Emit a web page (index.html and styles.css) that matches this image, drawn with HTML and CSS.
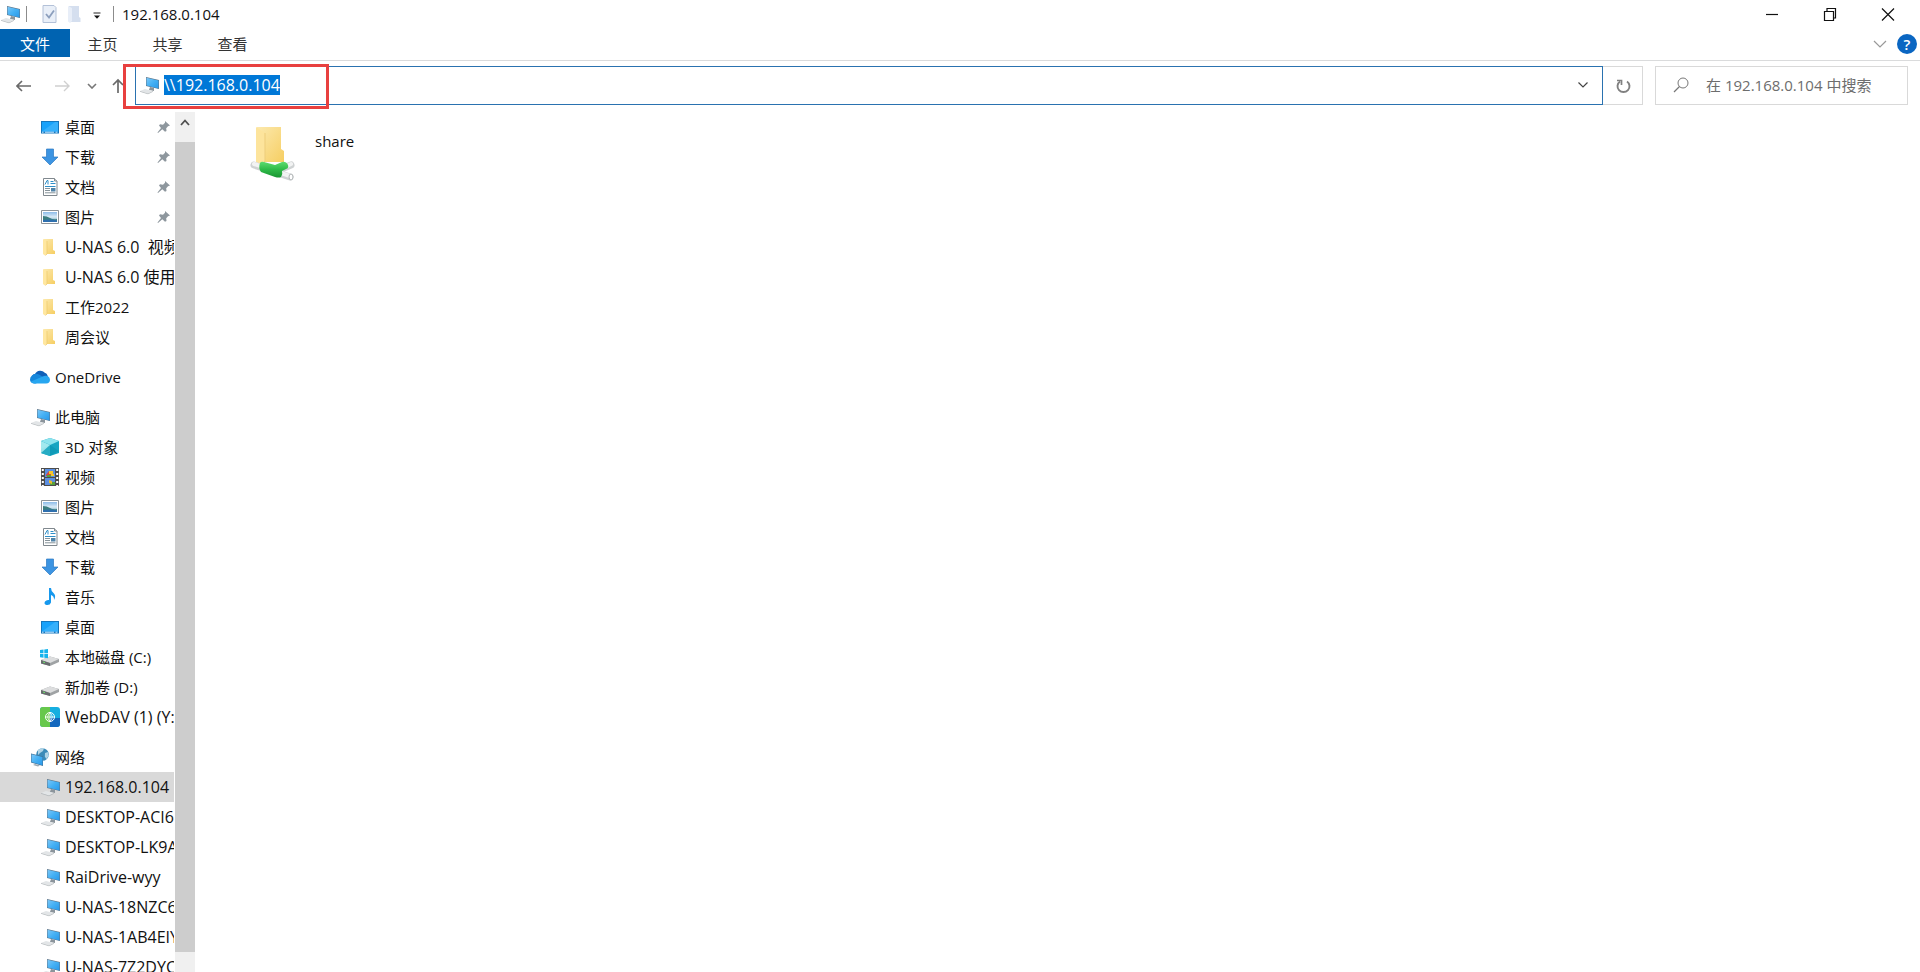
FILE: index.html
```html
<!DOCTYPE html>
<html lang="zh-CN">
<head>
<meta charset="utf-8">
<title>192.168.0.104</title>
<link rel="stylesheet" href="styles.css">
</head>
<body>
<svg class="sprite" aria-hidden="true">
  <defs>
    <linearGradient id="screen" x1="0" y1="0" x2="1" y2="1"><stop offset="0" stop-color="#7cc8f8"/><stop offset=".5" stop-color="#44b0f4"/><stop offset="1" stop-color="#2a98e8"/></linearGradient>
    <linearGradient id="gold" x1="0" y1="0" x2="1" y2="1"><stop offset="0" stop-color="#fce9ae"/><stop offset="1" stop-color="#f6ce62"/></linearGradient>
    <linearGradient id="sky" x1="0" y1="0" x2="0" y2="1"><stop offset="0" stop-color="#8cbce8"/><stop offset=".5" stop-color="#dcecf6"/><stop offset="1" stop-color="#4a90a8"/></linearGradient>
    <linearGradient id="pipe" x1="0" y1="0" x2="0" y2="1"><stop offset="0" stop-color="#5fdc70"/><stop offset=".5" stop-color="#2fba48"/><stop offset="1" stop-color="#1a9632"/></linearGradient>
  </defs>
  <symbol id="pc" viewBox="0 0 20 20">
    <path d="M11 12l4 1v3l-5-1z" fill="#8b949b"/>
    <path d="M7 2l13 3v9L7 11z" fill="#5d7488"/>
    <path d="M7.500 2.700l12 2.800v7.900l-12-2.900z" fill="url(#screen)"/>
    <path d="M1 16l5-2 8 2-5 2.500z" fill="#e2e5e7"/>
    <path d="M1 16l8 2.500L14 16v.7l-5 2.500-8-2.500z" fill="#b3b8bb"/>
  </symbol>
  <symbol id="desktop" viewBox="0 0 20 20"><path d="M1 4h18v12.500H1z" fill="#1677bd"/><path d="M2 5h16v9.500H2z" fill="#18a2fa"/><path d="M2 14.500l13-9.500h3v9.500z" fill="#36b0fb"/><path d="M2 15.200h1.500M5 15.200h9M15.500 15.200h2" stroke="#cfeaff"/></symbol>
  <symbol id="down" viewBox="0 0 20 20"><path d="M6.500 2h7v8H18l-8 8-8-8h4.500z" fill="#3c94e2" stroke="#2b78c2" stroke-width=".7"/></symbol>
  <symbol id="doc" viewBox="0 0 20 20"><path d="M3.500 1.500h11l2.500 2.500v14.500H3.500z" fill="#fff" stroke="#80888e"/><path d="M14.500 1.500V4H17" fill="#d7dde0" stroke="#80888e"/><path d="M5 7.500L7 3.500h1v4M10.500 4.500h3M10.500 6.500h5" fill="none" stroke="#2f8fc8"/><path d="M5 9.500h10.500" stroke="#2f8fc8"/><path d="M5 11.500h5M5 13.500h5M5 15.800h10.500" stroke="#87939a"/><path d="M11 11h4.500v3.500H11z" fill="#4f83a8"/></symbol>
  <symbol id="pic" viewBox="0 0 20 20"><path d="M1.500 3.500h17v13h-17z" fill="#fff" stroke="#8d9499"/><path d="M3 5h14v10H3z" fill="url(#sky)"/><path d="M3 9q4 0 7 2t7 1v2.500H3z" fill="#3b7e80"/><path d="M3 13q7-1 14 .5V15H3z" fill="#2e6fae"/></symbol>
  <symbol id="folder" viewBox="0 0 20 20"><path d="M4 2h9v11l2 1v3H4z" fill="url(#gold)"/><path d="M3 2l4 2v13l-2 1.500L3 17z" fill="#ffe7a0"/><path d="M7 4v13l-1.500 1.500" fill="none" stroke="#edc869" stroke-width=".7"/></symbol>
  <symbol id="cloud" viewBox="0 0 20 20"><path d="M5 7a6 6 0 0 1 10-1q2 0 3 4L9 12 2 9q1-2 3-2z" fill="#0f5fb8"/><path d="M2 8.500q3-3 7-1l5 3-8 6H4Q0 16 0 12.500 0 10 2 8.500z" fill="#1587dc"/><path d="M14 9q5-1 6 3.500 0 3.800-4 4H4q-2 0-3-2z" fill="#27a6f0"/></symbol>
  <symbol id="cube" viewBox="0 0 20 20"><path d="M10 1l9 3v12l-9 3-9-3V4z" fill="#17a5c2"/><path d="M1 4l9-3 9 3-9 4z" fill="#8ee4ee"/><path d="M1 4l9 4v11l-9-3z" fill="#40c5d8"/><path d="M1 12l9-4 9 6-9 5-9-3z" fill="#078eac" opacity=".45"/><path d="M1 4l9 4-9 8z" fill="#baf1f4" opacity=".8"/></symbol>
  <symbol id="film" viewBox="0 0 20 20"><path d="M1 1h18v18H1z" fill="#4c4c4c"/><path d="M5 2h10v8H5zM5 11h10v7H5z" fill="#5b8fe2"/><path d="M6 8l3-4 3 1 2 4H6z" fill="#de4638"/><path d="M9 4h4v3H9zM11 7h3v2h-3z" fill="#f3c72c"/><path d="M7 8h4v2H7zM10 15h5v3h-5z" fill="#56a13c"/><path d="M9 13l3 1v3l-3-1z" fill="#eebb2b"/><path d="M2.800 2v17M17.200 2v17" stroke="#fff" stroke-width="2" stroke-dasharray="2 2"/></symbol>
  <symbol id="note" viewBox="0 0 20 20"><path d="M9 1h2q0 3 2.500 5 3 2.500.5 7 .3-4-3-5v7.500q-1 3-4.500 2.500Q3.500 17 5 14.500q1.500-2 4-1.500z" fill="#1698ed"/></symbol>
  <symbol id="drive" viewBox="0 0 20 20"><path d="M1 13l9-3.500 9 2.500v3l-9 4-9-2.500z" fill="#9fa2a4"/><path d="M1 13l9-3.500 9 2.500-9 4z" fill="#dcddde"/><path d="M1 13l9 3v3l-9-2.500z" fill="#686c6e"/><path d="M3 15l2 .6" stroke="#6ee46f"/></symbol>
  <symbol id="sysdrive" viewBox="0 0 20 20"><use href="#drive"/><path d="M0 3l3.500-.5v3.800H0zM4.300 2.400L8 2v4.300H4.300zM0 7h3.500v3.700L0 10.300zM4.300 7H8v4.200l-3.700-.5z" fill="#15b3ec"/></symbol>
  <symbol id="dav" viewBox="0 0 20 20"><rect width="20" height="20" rx="3" fill="#16aee0"/><path d="M3 0h7v20H3q-3 0-3-3V3q0-3 3-3z" fill="#67c84c"/><path d="M10 11h10v6q0 3-3 3h-7z" fill="#1267bd"/><circle cx="10" cy="10" r="4.500" fill="none" stroke="#fff"/><path d="M5.500 10h9M10 5.500v9M10 5.500q-4.500 4.500 0 9M10 5.500q4.500 4.500 0 9" fill="none" stroke="#fff" stroke-width=".8"/></symbol>
  <symbol id="net" viewBox="0 0 20 20"><circle cx="12.500" cy="7.500" r="6.300" fill="#3c8bb8"/><path d="M8 3q3-2.500 6-2l-1 3-3 2-2 2zM15 6l3-1 .8 4-2.500 3-1.500-2.500z" fill="#b0d4e6"/><path d="M1 6.500l12 3v9.500L1 15.500z" fill="#3f6f95"/><path d="M1.500 7.200l11 2.800v8.200l-11-3.200z" fill="url(#screen)"/><path d="M5 17l5 1.500-2 .9-5-1.400z" fill="#9ba9b2"/></symbol>
  <symbol id="pin" viewBox="0 0 14 14"><path d="M8 1l5 4.500-2 .8-1.800 2 .3 2.700-1.500.8-2.700-2.600L1 13l-.5-.5L4 8 2 5.500 3 4.300l3 .4 2-1.900z" fill="#8e979e"/></symbol>
</svg>

<header class="titlebar">
  <svg class="icon app-icon"><use href="#pc"/></svg>
  <span class="rule"></span>
  <button class="quick quick-check" aria-label="属性"><svg width="16" height="20" viewBox="0 0 16 20"><path d="M1 1.500h11l2 2v15H1z" fill="#e9eff8" stroke="#b3c1d8"/><path d="M4 10l3 3.500L12 6.500" fill="none" stroke="#8c9fbd" stroke-width="1.800"/></svg></button>
  <button class="quick" aria-label="新建文件夹"><svg width="13" height="20" viewBox="0 0 13 20"><path d="M1 2h10v11l1.500 1v4H1z" fill="#d5dfef"/><path d="M0 2l4 2v13l-2 2-2-1.500z" fill="#e8eef8"/></svg></button>
  <button class="quick quick-more" aria-label="自定义快速访问工具栏"><svg width="8" height="8" viewBox="0 0 8 8"><path d="M.5 1h7" stroke="#222"/><path d="M1 3.500h6L4 6.800z" fill="#111"/></svg></button>
  <span class="rule"></span>
  <h1 class="title">192.168.0.104</h1>
  <div class="window-controls">
    <button aria-label="最小化"><svg width="14" height="14" viewBox="0 0 14 14"><path d="M1 7.500h12"/></svg></button>
    <button aria-label="还原"><svg width="14" height="14" viewBox="0 0 14 14"><path d="M1.500 4.500h9v9h-9zM4 4V1.500h8.500V11H11"/></svg></button>
    <button aria-label="关闭"><svg width="14" height="14" viewBox="0 0 14 14"><path d="M1 1.500l12 12M13 1.500l-12 12"/></svg></button>
  </div>
</header>

<div class="ribbon">
  <button class="tab tab-file">文件</button>
  <button class="tab">主页</button>
  <button class="tab">共享</button>
  <button class="tab">查看</button>
  <div class="ribbon-end">
    <button aria-label="展开功能区"><svg width="14" height="8" viewBox="0 0 14 8"><path d="M1 1l6 6 6-6" fill="none" stroke="#999" stroke-width="1.200"/></svg></button>
    <button class="help" aria-label="帮助">?</button>
  </div>
</div>

<div class="toolbar">
  <div class="history">
    <button aria-label="后退"><svg width="16" height="14" viewBox="0 0 16 14"><path d="M6 2L1 7l5 5M1 7h14" fill="none" stroke="#6a6a6a" stroke-width="1.600"/></svg></button>
    <button aria-label="前进" disabled><svg width="16" height="14" viewBox="0 0 16 14"><path d="M9 2l5 5-5 5M14 7H0" fill="none" stroke="#d0d0d0" stroke-width="1.400"/></svg></button>
    <button class="recent" aria-label="最近浏览的位置"><svg width="10" height="6" viewBox="0 0 10 6"><path d="M1 1l4 4 4-4" fill="none" stroke="#777" stroke-width="1.600"/></svg></button>
    <button class="up" aria-label="向上"><svg width="12" height="16" viewBox="0 0 12 16"><path d="M1 7l5-5 5 5M6 2v13" fill="none" stroke="#6a6a6a" stroke-width="1.700"/></svg></button>
  </div>
  <div class="address">
    <svg class="icon"><use href="#pc"/></svg>
    <input id="address" type="text" value="\\192.168.0.104" aria-label="地址" spellcheck="false">
    <button aria-label="以前的位置"><svg width="10" height="6" viewBox="0 0 10 6"><path d="M.5.500L5 5 9.500.500" fill="none" stroke="#444" stroke-width="1.200"/></svg></button>
    <span class="highlight"></span>
  </div>
  <button class="refresh" aria-label="刷新"><svg width="16" height="16" viewBox="0 0 16 16"><path d="M5 3.500A6 5.800 0 1 0 12 3.500" fill="none" stroke="#808080" stroke-width="1.900"/><path d="M2 2.500h4.500V7" fill="none" stroke="#808080" stroke-width="1.700"/></svg></button>
  <div class="search">
    <svg width="16" height="16" viewBox="0 0 16 16"><circle cx="10" cy="6" r="5" fill="none" stroke="#777"/><path d="M6.500 9.500L1 15" stroke="#777" stroke-width="1.200"/></svg>
    <input type="text" placeholder="在 192.168.0.104 中搜索" aria-label="搜索">
  </div>
</div>

<div class="body">
  <nav class="tree" aria-label="导航窗格">
    <div class="group">
      <a class="row" href="#"><svg class="icon"><use href="#desktop"/></svg><span class="label">桌面</span><svg class="pin"><use href="#pin"/></svg></a>
      <a class="row" href="#"><svg class="icon"><use href="#down"/></svg><span class="label">下载</span><svg class="pin"><use href="#pin"/></svg></a>
      <a class="row" href="#"><svg class="icon"><use href="#doc"/></svg><span class="label">文档</span><svg class="pin"><use href="#pin"/></svg></a>
      <a class="row" href="#"><svg class="icon"><use href="#pic"/></svg><span class="label">图片</span><svg class="pin"><use href="#pin"/></svg></a>
      <a class="row named" href="#"><svg class="icon"><use href="#folder"/></svg><span class="label">U-NAS 6.0  视频</span></a>
      <a class="row named" href="#"><svg class="icon"><use href="#folder"/></svg><span class="label">U-NAS 6.0 使用</span></a>
      <a class="row" href="#"><svg class="icon"><use href="#folder"/></svg><span class="label">工作2022</span></a>
      <a class="row" href="#"><svg class="icon"><use href="#folder"/></svg><span class="label">周会议</span></a>
    </div>
    <div class="group">
      <a class="row root" href="#"><svg class="icon"><use href="#cloud"/></svg><span class="label">OneDrive</span></a>
    </div>
    <div class="group">
      <a class="row root" href="#"><svg class="icon"><use href="#pc"/></svg><span class="label">此电脑</span></a>
      <a class="row" href="#"><svg class="icon"><use href="#cube"/></svg><span class="label">3D 对象</span></a>
      <a class="row" href="#"><svg class="icon"><use href="#film"/></svg><span class="label">视频</span></a>
      <a class="row" href="#"><svg class="icon"><use href="#pic"/></svg><span class="label">图片</span></a>
      <a class="row" href="#"><svg class="icon"><use href="#doc"/></svg><span class="label">文档</span></a>
      <a class="row" href="#"><svg class="icon"><use href="#down"/></svg><span class="label">下载</span></a>
      <a class="row" href="#"><svg class="icon"><use href="#note"/></svg><span class="label">音乐</span></a>
      <a class="row" href="#"><svg class="icon"><use href="#desktop"/></svg><span class="label">桌面</span></a>
      <a class="row" href="#"><svg class="icon"><use href="#sysdrive"/></svg><span class="label">本地磁盘 (C:)</span></a>
      <a class="row" href="#"><svg class="icon"><use href="#drive"/></svg><span class="label">新加卷 (D:)</span></a>
      <a class="row named" href="#"><svg class="icon"><use href="#dav"/></svg><span class="label">WebDAV (1) (Y:)</span></a>
    </div>
    <div class="group">
      <a class="row root" href="#"><svg class="icon"><use href="#net"/></svg><span class="label">网络</span></a>
      <a class="row named selected" href="#" aria-current="page"><svg class="icon"><use href="#pc"/></svg><span class="label">192.168.0.104</span></a>
      <a class="row named" href="#"><svg class="icon"><use href="#pc"/></svg><span class="label">DESKTOP-ACI6</span></a>
      <a class="row named" href="#"><svg class="icon"><use href="#pc"/></svg><span class="label">DESKTOP-LK9A</span></a>
      <a class="row named" href="#"><svg class="icon"><use href="#pc"/></svg><span class="label">RaiDrive-wyy</span></a>
      <a class="row named" href="#"><svg class="icon"><use href="#pc"/></svg><span class="label">U-NAS-18NZC6</span></a>
      <a class="row named" href="#"><svg class="icon"><use href="#pc"/></svg><span class="label">U-NAS-1AB4EIY</span></a>
      <a class="row named" href="#"><svg class="icon"><use href="#pc"/></svg><span class="label">U-NAS-7Z2DYC</span></a>
    </div>
  </nav>
  <div class="scrollbar">
    <button aria-label="向上滚动"><svg width="10" height="7" viewBox="0 0 10 7"><path d="M1 6l4-4.500L9 6" fill="none" stroke="#505050" stroke-width="1.800"/></svg></button>
    <div class="thumb"></div>
  </div>
  <main class="files">
    <a class="tile" href="#">
      <svg width="48" height="56" viewBox="0 0 48 56">
        <path d="M8 1h24v22l3 2v11H8z" fill="url(#gold)"/>
        <path d="M7 1l9 6v28l-3 4-6-3z" fill="#fde49c"/><path d="M16 7v28l-3 4" fill="none" stroke="#edcd7b"/>
        <path d="M42 39l-12 5M5 39l36 12" stroke="#cfd2d3" stroke-width="7" stroke-linecap="round"/>
        <path d="M42 38l-6 3M5 38l36 12" stroke="#f2f3f3" stroke-width="4" stroke-linecap="round"/>
        <path d="M11 37q1-2 4-1l11 3 7-3q4-1 6 3 1 3-2 4l-4 2q1 3-1 6-2 1-6 0l-14-5q-3-4-1-9z" fill="url(#pipe)"/>
        <ellipse cx="42" cy="51" rx="2" ry="3" fill="#fff" stroke="#aeb3b4"/>
      </svg>
      <span class="tile-name">share</span>
    </a>
  </main>
</div>
<script src="main.js"></script>
</body>
</html>
```
FILE: styles.css
```css
* { box-sizing: border-box; }

body {
  margin: 0;
  height: 100vh;
  overflow: hidden;
  display: flex;
  flex-direction: column;
  background: #fff;
  color: #111;
  font: 15px/20px "Open Sans", "Noto Sans CJK SC", sans-serif;
}

button, input { font: inherit; color: inherit; border: 0; padding: 0; margin: 0; background: none; }
button { display: flex; align-items: center; justify-content: center; }
input { outline: 0; min-width: 0; }
a { color: inherit; text-decoration: none; }
svg { display: block; flex: none; }

.sprite { position: absolute; width: 0; height: 0; }
.icon { width: 20px; height: 20px; }

.titlebar { display: flex; align-items: center; height: 29px; flex: none; padding-bottom: 1px; }
.app-icon { margin-right: 6px; }
.rule { width: 1px; height: 16px; background: #8c8c8c; }
.quick-check { margin: 0 10px 0 15px; }
.quick-more { margin: 3px 12px 0 12px; }
.title { margin: 0 0 0 8px; font-size: 15px; font-weight: 400; line-height: 20px; padding-bottom: 1px; }
.window-controls { display: flex; height: 100%; margin-left: auto; padding-right: 3px; }
.window-controls button { width: 58px; }
.window-controls path { fill: none; stroke: #111; stroke-width: 1.2; }

.ribbon { display: flex; height: 32px; flex: none; padding-bottom: 3px; border-bottom: 1px solid #dadbdc; }
.tab { width: 65px; padding-top: 2px; color: #333; }
.tab-file { width: 70px; background: #0063b1; color: #fff; }
.ribbon-end { display: flex; align-items: center; gap: 10px; margin-left: auto; padding: 2px 3px 0 0; }
.help { width: 20px; height: 20px; border-radius: 50%; background: #0a66c2; color: #fff; font-weight: 600; }

.toolbar { display: flex; height: 51px; flex: none; padding: 5px 12px 7px 0; }
.history { display: flex; width: 135px; padding-left: 4px; flex: none; }
.history button { width: 39px; }
.history .recent { width: 20px; }
.history .up { width: 32px; }
.address {
  position: relative;
  display: flex;
  align-items: center;
  flex: 1;
  padding: 0 0 2px 3px;
  border: 1px solid #2a72b0;
}
.address input { flex: 1; height: 20px; margin-left: 5px; font-size: 16px; line-height: 20px; }
.address input::selection { background: #0078d7; color: #fff; }
.address button { width: 38px; height: 100%; }
.highlight {
  position: absolute;
  left: -13px;
  top: -3px;
  width: 206px;
  height: 45px;
  border: 3px solid #e8403f;
  pointer-events: none;
}
.refresh { width: 40px; border: 1px solid #d9d9d9; border-left: 0; }
.search {
  display: flex;
  align-items: center;
  width: 253px;
  margin-left: 12px;
  padding: 0 0 2px 17px;
  gap: 17px;
  border: 1px solid #d9d9d9;
}
.search input { flex: 1; height: 24px; }
.search input::placeholder { color: #6d6d6d; opacity: 1; }

.body { display: flex; flex: 1; min-height: 0; }
.tree { width: 174px; flex: none; overflow: hidden; }
.group { margin-bottom: 10px; }
.row { display: flex; align-items: center; height: 30px; padding-left: 40px; }
.root { padding-left: 30px; }
.named { font-size: 16px; }
.selected { background: #d9d9d9; }
.label { flex: 1; min-width: 0; margin-left: 5px; overflow: hidden; white-space: pre; }
.pin { width: 14px; height: 14px; margin-right: 3px; }

.scrollbar {
  display: flex;
  flex-direction: column;
  width: 20px;
  flex: none;
  margin-left: 1px;
  padding-bottom: 20px;
  background: #f0f0f0;
}
.scrollbar button { height: 30px; padding-bottom: 10px; }
.thumb { flex: 1; background: #cdcdcd; }

.files { flex: 1; padding: 14px 54px; }
.tile { display: inline-flex; gap: 18px; }
.tile-name { padding-top: 5px; }
```
FILE: main.js
```js
const address = document.getElementById("address");
address.focus();
address.select();
```
